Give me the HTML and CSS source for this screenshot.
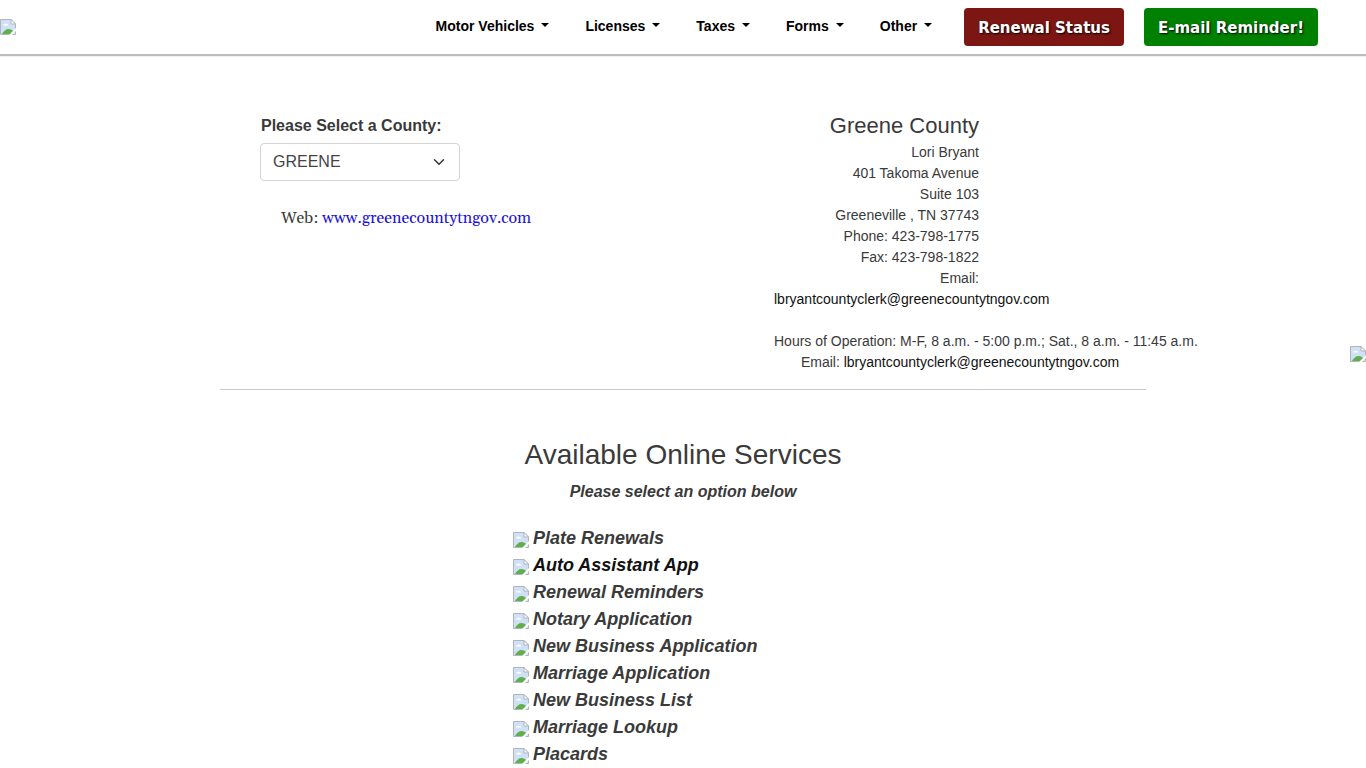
FILE: index.html
```html
<!DOCTYPE html>
<html lang="en">
<head>
<meta charset="utf-8">
<meta name="viewport" content="width=device-width, initial-scale=1">
<title>Greene County Clerk</title>
<link rel="stylesheet" href="styles.css">
</head>
<body>
<svg class="sprite" aria-hidden="true">
  <symbol id="image" viewBox="0 0 16 16">
    <path d="M.5.5h10.500l4.500 4.500v10.500H.5z" fill="#cfe0f7"/>
    <path d="M3 6.500c0-1 .8-1.500 1.600-1.300.4-1 2-1 2.400 0 .9-.1 1.400.5 1.400 1.300z" fill="#fff"/>
    <path d="M2 15c1.500-3 4-5 6.500-5 2 0 4 1 5 2.500L12 15z" fill="#5fb04a"/>
    <path d="M.5 15.500V.5h10.500l4.500 4.500v10.500z" fill="none" stroke="#b0b4bb"/>
    <path d="M11 .5V5h4.500z" fill="#fff" stroke="#b0b4bb"/>
    <path d="M16 9v3l-4 4H9z" fill="#fff"/>
  </symbol>
</svg>
<header class="header">
  <a class="logo" href="#" aria-label="Home"><svg class="pic"><use href="#image"/></svg></a>
  <nav class="nav">
    <button class="menu" type="button">Motor Vehicles</button>
    <button class="menu" type="button">Licenses</button>
    <button class="menu" type="button">Taxes</button>
    <button class="menu" type="button">Forms</button>
    <button class="menu" type="button">Other</button>
  </nav>
  <div class="actions">
    <a class="btn btn-red" href="#">Renewal Status</a>
    <a class="btn btn-green" href="#">E-mail Reminder!</a>
  </div>
</header>
<a class="side-tab" href="#" aria-label="Feedback"><svg class="pic"><use href="#image"/></svg></a>
<main class="main">
  <section class="county">
    <div class="picker">
      <label class="label" for="county">Please Select a County:</label>
      <select class="select" id="county"><option>GREENE</option></select>
      <p class="web">Web: <a href="#">www.greenecountytngov.com</a></p>
    </div>
    <div class="contact">
      <address class="address">
        <h1 class="name">Greene County</h1>
        Lori Bryant<br>401 Takoma Avenue<br>Suite 103<br>Greeneville , TN 37743<br>Phone: 423-798-1775<br>Fax: 423-798-1822<br>Email:<br>
        <a href="#">lbryantcountyclerk@greenecountytngov.com</a>
      </address>
      <p class="hours">Hours of Operation: M-F, 8 a.m. - 5:00 p.m.; Sat., 8 a.m. - 11:45 a.m.<br>Email: <a href="#">lbryantcountyclerk@greenecountytngov.com</a></p>
    </div>
  </section>
  <section class="services">
    <h2 class="title">Available Online Services</h2>
    <p class="hint">Please select an option below</p>
    <ul class="list">
      <li><svg class="pic"><use href="#image"/></svg><a href="#">Plate Renewals</a></li>
      <li><svg class="pic"><use href="#image"/></svg><a class="current" href="#">Auto Assistant App</a></li>
      <li><svg class="pic"><use href="#image"/></svg><a href="#">Renewal Reminders</a></li>
      <li><svg class="pic"><use href="#image"/></svg><a href="#">Notary Application</a></li>
      <li><svg class="pic"><use href="#image"/></svg><a href="#">New Business Application</a></li>
      <li><svg class="pic"><use href="#image"/></svg><a href="#">Marriage Application</a></li>
      <li><svg class="pic"><use href="#image"/></svg><a href="#">New Business List</a></li>
      <li><svg class="pic"><use href="#image"/></svg><a href="#">Marriage Lookup</a></li>
      <li><svg class="pic"><use href="#image"/></svg><a href="#">Placards</a></li>
    </ul>
  </section>
</main>
</body>
</html>
```
FILE: styles.css
```css
* { box-sizing: border-box; }
body {
  margin: 0;
  font: 14px/21px "Liberation Sans", Arial, sans-serif;
  color: #3a3a3a;
  background: #fff;
}
h1, h2, p, ul { margin: 0; padding: 0; font-weight: 400; }
a { color: #111; text-decoration: none; }
.sprite { position: absolute; width: 0; height: 0; }
.pic { display: block; flex: none; width: 16px; height: 16px; }

.header {
  display: flex;
  align-items: center;
  padding: 8px 48px 8px 0;
  border-bottom: 2px solid #bcbcbc;
  box-shadow: 0 1px 1px #f0f0f0;
}
.logo { margin-right: auto; }
.nav { display: flex; gap: 36px; margin-right: 32px; }
.menu {
  display: flex;
  align-items: center;
  gap: 7px;
  padding: 0 0 2px;
  border: 0;
  background: none;
  font: bold 14px/21px "Liberation Sans", Arial, sans-serif;
  color: #000;
}
.menu::after {
  content: "";
  border: 4px solid transparent;
  border-top-color: #000;
  border-bottom: 0;
  margin-bottom: 2px;
}
.actions { display: flex; gap: 20px; }
.btn {
  padding: 8px 14px 6px;
  border-radius: 4px;
  font: bold 15px/24px "DejaVu Sans", Verdana, sans-serif;
  white-space: nowrap;
  color: #fff;
  text-shadow: 1px 1px 2px #000;
}
.btn-red { background: #7b1613; }
.btn-green { background: #008000; }

.side-tab { position: fixed; right: 0; top: 346px; }

.main { padding: 54px 220px 0; }
.county {
  display: flex;
  justify-content: space-between;
  padding: 0 0 16px 40px;
  border-bottom: 1px solid #ccc;
}
.picker { display: flex; flex-direction: column; }
.label { padding: 4px 1px 5px; font-size: 16px; line-height: 24px; font-weight: bold; }
.select {
  appearance: none;
  width: 200px;
  height: 38px;
  padding: 0 12px;
  border: 1px solid #d5d5d5;
  border-radius: 4px;
  font: 16px/24px "Liberation Sans", Arial, sans-serif;
  color: #444;
  background: #fff url("data:image/svg+xml,%3Csvg xmlns='http://www.w3.org/2000/svg' viewBox='0 0 16 16'%3E%3Cpath fill='none' stroke='%23343a40' stroke-linecap='round' stroke-linejoin='round' stroke-width='2' d='m2 5 6 6 6-6'/%3E%3C/svg%3E") no-repeat right 14px center / 12px 12px;
}
.web { margin: 25px 0 0 21px; font: 16px/24px Georgia, Gelasio, "Liberation Serif", serif; }
.web a { color: #1a10d8; }
.contact { flex: none; width: 372px; white-space: nowrap; }
.address { width: 205px; text-align: right; font-style: normal; }
.name { padding: 3px 0; font-size: 22px; line-height: 26px; }
.hours { margin-top: 21px; text-align: center; }

.services { display: flex; flex-direction: column; align-items: center; padding-top: 48px; }
.title { font-size: 28px; line-height: 34px; }
.hint { margin-top: 8px; font: italic bold 16px/24px "Liberation Sans", Arial, sans-serif; }
.list {
  width: 340px;
  margin-top: 21px;
  list-style: none;
  font: italic bold 18px/27px "Liberation Sans", Arial, sans-serif;
}
.list li { display: flex; gap: 4px; }
.list .pic { margin-top: 7px; }
.list a { color: #3a3a3a; }
.list .current { color: #111; }
```
